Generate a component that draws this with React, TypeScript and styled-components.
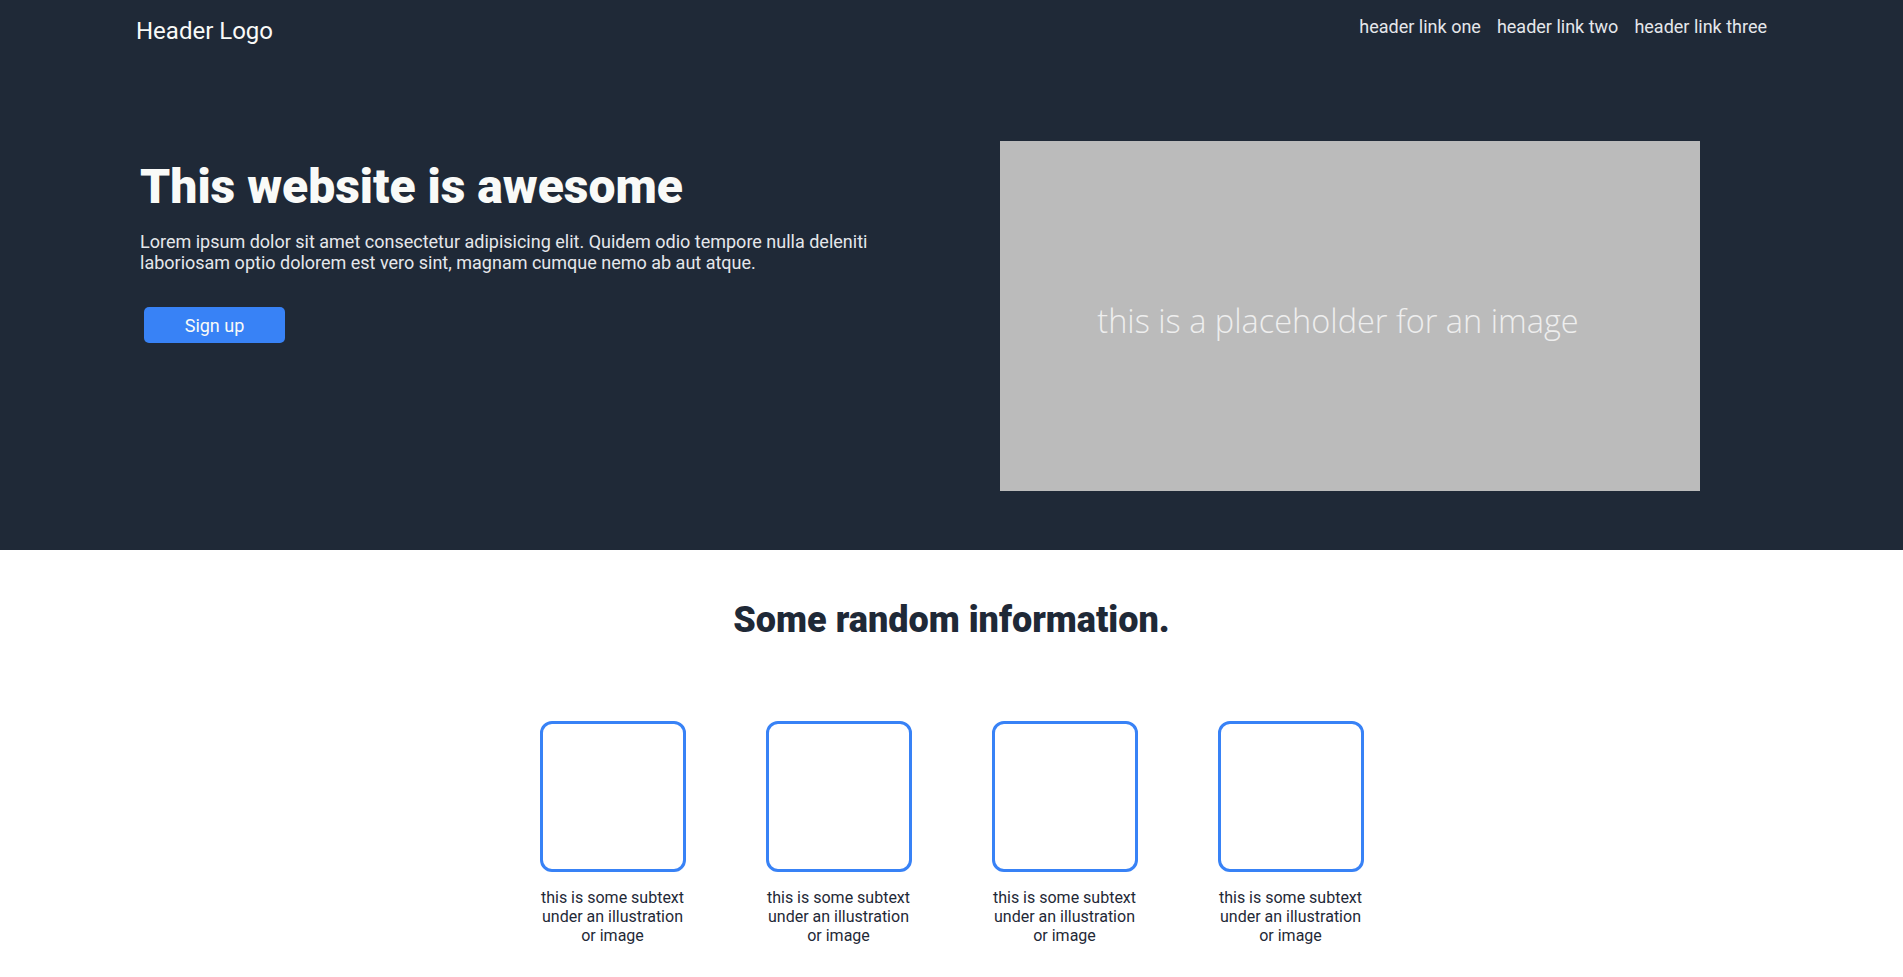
import React from "react";
import styled, { createGlobalStyle } from "styled-components";

const GlobalStyle = createGlobalStyle`
  html, body {
    margin: 0;
    padding: 0;
    background: #ffffff;
    font-family: Roboto, "Liberation Sans", Arial, sans-serif;
  }
  * { box-sizing: border-box; }
`;

const DarkSection = styled.div`
  background: #1f2937;
  padding-bottom: 59px;
`;

const Header = styled.header`
  display: flex;
  justify-content: space-between;
  align-items: flex-start;
  padding: 16px 136px 0 136px;
`;

const Logo = styled.div`
  margin-top: 1px;
  font-size: 24px;
  color: #f9faf8;
`;

const NavLinks = styled.nav`
  display: flex;
  gap: 16px;
`;

const NavLink = styled.a`
  font-size: 18px;
  color: #e5e7eb;
  text-decoration: none;
`;

const Hero = styled.section`
  display: flex;
  align-items: flex-start;
  gap: 80px;
  padding: 96px 0 0 140px;
`;

const HeroText = styled.div`
  width: 780px;
  padding-top: 17px;
  display: flex;
  flex-direction: column;
  align-items: flex-start;
`;

const HeroTitle = styled.h1`
  margin: 0;
  font-size: 48px;
  font-weight: 900;
  color: #f9faf8;
`;

const HeroLead = styled.p`
  margin: 16px 0 0;
  font-size: 18px;
  color: #e5e7eb;
`;

const SignUp = styled.button`
  margin: 34px 0 0 4px;
  width: 141px;
  height: 36px;
  border: none;
  border-radius: 5px;
  background: #3882f6;
  color: #f9faf8;
  font-family: Roboto, "Liberation Sans", Arial, sans-serif;
  font-size: 18px;
  cursor: pointer;
`;

const Placeholder = styled.div`
  width: 700px;
  height: 350px;
  background: #bbbbbb;
  display: flex;
  align-items: center;
  justify-content: center;
  padding: 8px 24px 0 0;
  font-family: "Open Sans", "Noto Sans", sans-serif;
  font-weight: 300;
  font-size: 32.5px;
  color: #eeeeee;
`;

const InfoSection = styled.section`
  padding: 49px 0 30px;
  display: flex;
  flex-direction: column;
  align-items: center;
`;

const InfoTitle = styled.h2`
  margin: 0;
  font-size: 36px;
  font-weight: 900;
  color: #1f2937;
`;

const Cards = styled.div`
  margin-top: 80px;
  display: flex;
  gap: 80px;
`;

const Card = styled.div`
  width: 146px;
  display: flex;
  flex-direction: column;
  align-items: center;
`;

const Illustration = styled.div`
  width: 146px;
  height: 151px;
  border: 3px solid #3882f6;
  border-radius: 12px;
`;

const Subtext = styled.p`
  margin: 16px 0 0;
  font-size: 16px;
  color: #1f2937;
  text-align: center;
`;

const cards = [1, 2, 3, 4];

export default function App() {
  return (
    <>
      <GlobalStyle />
      <DarkSection>
        <Header>
          <Logo>Header Logo</Logo>
          <NavLinks>
            <NavLink href="#">header link one</NavLink>
            <NavLink href="#">header link two</NavLink>
            <NavLink href="#">header link three</NavLink>
          </NavLinks>
        </Header>
        <Hero>
          <HeroText>
            <HeroTitle>This website is awesome</HeroTitle>
            <HeroLead>
              Lorem ipsum dolor sit amet consectetur adipisicing elit. Quidem
              odio tempore nulla deleniti laboriosam optio dolorem est vero
              sint, magnam cumque nemo ab aut atque.
            </HeroLead>
            <SignUp>Sign up</SignUp>
          </HeroText>
          <Placeholder>this is a placeholder for an image</Placeholder>
        </Hero>
      </DarkSection>
      <InfoSection>
        <InfoTitle>Some random information.</InfoTitle>
        <Cards>
          {cards.map((c) => (
            <Card key={c}>
              <Illustration />
              <Subtext>this is some subtext under an illustration or image</Subtext>
            </Card>
          ))}
        </Cards>
      </InfoSection>
    </>
  );
}
